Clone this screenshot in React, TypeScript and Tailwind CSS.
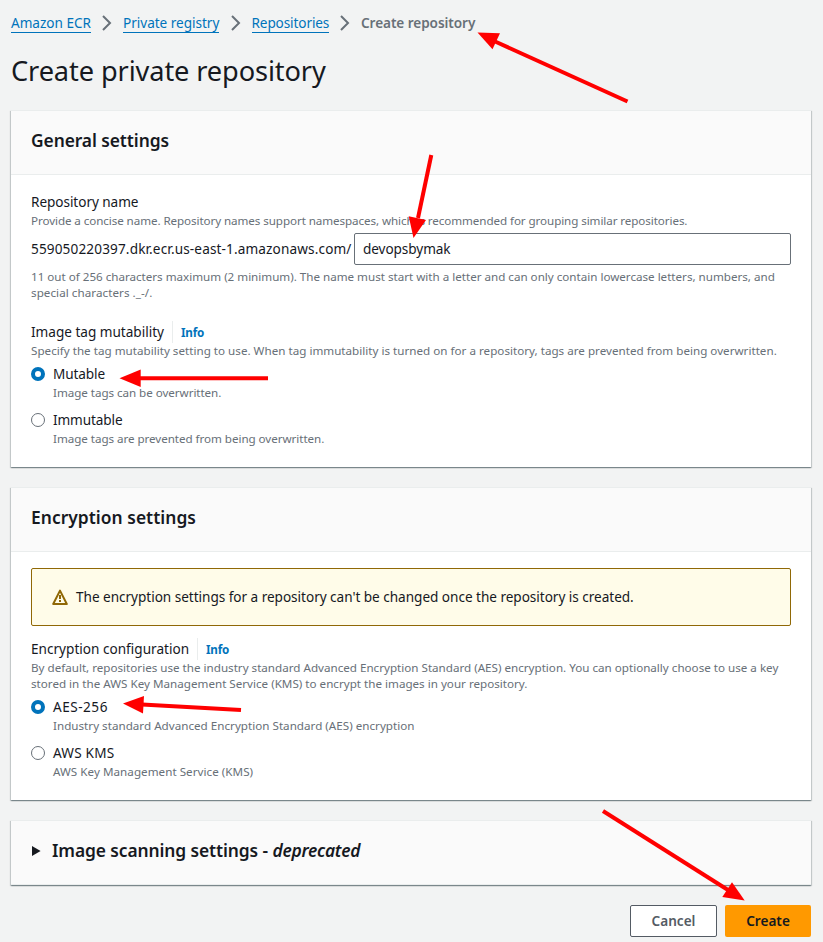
import type { ReactNode } from 'react';

const CARD =
  'border-t border-[#eaeded] bg-white shadow-[0_1px_1px_0_rgba(0,28,36,0.3),1px_1px_1px_0_rgba(0,28,36,0.15),-1px_1px_1px_0_rgba(0,28,36,0.15)]';

function Crumb({ children, className = '' }: { children: ReactNode; className?: string }) {
  return (
    <a href="#" className={`shrink-0 whitespace-nowrap text-[#0073bb] ${className}`}>
      <span className="border-b border-[#0073bb]">{children}</span>
    </a>
  );
}

function Chevron() {
  return (
    <svg viewBox="0 0 16 16" className="mx-2 size-4 shrink-0" fill="none" stroke="#687078" strokeWidth="2">
      <path d="M4 1l7 7-7 7" />
    </svg>
  );
}

function CardHeader({ children }: { children: ReactNode }) {
  return <div className="h-16 border-b border-[#eaeded] bg-[#fafafa] px-5 pt-[18px]">{children}</div>;
}

function Hint({ children, className = '' }: { children: ReactNode; className?: string }) {
  return <p className={`whitespace-nowrap text-[11.65px] leading-4 text-[#687078] ${className}`}>{children}</p>;
}

function LabelWithInfo({ children, className = '' }: { children: ReactNode; className?: string }) {
  return (
    <div className="flex h-[22px] items-center">
      <span className={`whitespace-nowrap ${className}`}>{children}</span>
      <span className="h-[22px] border-l border-[#eaeded]" />
      <a href="#" className="mt-px ml-2 text-[11.65px] leading-[22px] font-bold tracking-[-0.2px] text-[#0073bb]">
        Info
      </a>
    </div>
  );
}

interface RadioProps {
  checked?: boolean;
  label: string;
  hint: string;
  labelClass: string;
  hintClass: string;
}

function Radio({ checked, label, hint, labelClass, hintClass }: RadioProps) {
  return (
    <label className="flex gap-2">
      <span
        className={
          checked
            ? 'mt-1 size-3.5 shrink-0 rounded-full border-4 border-[#0073bb] bg-white'
            : 'mt-1 size-3.5 shrink-0 rounded-full border border-[#687078] bg-white'
        }
      />
      <span className="flex flex-col">
        <span className={`leading-[22px] ${labelClass}`}>{label}</span>
        <Hint className={hintClass}>{hint}</Hint>
      </span>
    </label>
  );
}

function Arrows() {
  return (
    <svg
      className="pointer-events-none absolute inset-0 h-[942px] w-[823px]"
      viewBox="0 0 823 942"
      fill="#ff0000"
      stroke="#ff0000"
    >
      <g strokeWidth="4" fill="none">
        <path d="M494 41L627.5 101.5" />
        <path d="M418 218L431.3 155" />
        <path d="M139 378.3H268" />
        <path d="M142 704.6L241 710" />
        <path d="M603 811L728 890" />
      </g>
      <g stroke="none">
        <path d="M477.5 32.5L500 33.3L492.5 49.3Z" />
        <path d="M413.5 238L408.7 216.3L426 220Z" />
        <path d="M119.5 378.3L140.7 369.5V387Z" />
        <path d="M123 703.6L144 696L143 713.5Z" />
        <path d="M744.7 900.5L732 882.3L722.3 896.9Z" />
      </g>
    </svg>
  );
}

export default function App() {
  return (
    <div className="relative h-[942px] w-[823px] overflow-hidden bg-[#f2f3f3] pt-3 pr-3 pl-[11px] font-['Noto_Sans','Open_Sans',sans-serif] text-[13.6px] leading-[22px] text-[#16191f]">
      <nav className="flex h-[22px] items-center">
        <Crumb className="w-20 tracking-[-0.02px]">Amazon ECR</Crumb>
        <Chevron />
        <Crumb className="w-[96.5px] tracking-[-0.03px]">Private registry</Crumb>
        <Chevron />
        <Crumb className="w-[77.5px] tracking-[-0.12px]">Repositories</Crumb>
        <Chevron />
        <span className="font-semibold tracking-[-0.07px] text-[#687078]">Create repository</span>
      </nav>

      <h1 className="mt-[19px] text-[27.2px] leading-9 tracking-[-0.11px]">Create private repository</h1>

      <main className="mt-[21px] flex w-[800px] flex-col gap-5">
        <section className={`h-[357px] ${CARD}`}>
          <CardHeader>
            <h2 className="text-[17.4px] leading-[22px] font-semibold tracking-[-0.08px]">General settings</h2>
          </CardHeader>
          <div className="px-5 pt-4">
            <div className="tracking-[-0.06px]">Repository name</div>
            <Hint className="tracking-[-0.09px]">
              Provide a concise name. Repository names support namespaces, which is recommended for grouping similar
              repositories.
            </Hint>
            <div className="mt-1 flex h-8 items-center">
              <span className="w-[323px] tracking-[0.13px]">559050220397.dkr.ecr.us-east-1.amazonaws.com/</span>
              <input
                className="h-8 w-[437px] rounded-xs border border-[#687078] bg-white px-2 pb-0.5 tracking-[-0.08px] outline-none"
                defaultValue="devopsbymak"
              />
            </div>
            <Hint className="mt-1 tracking-[-0.015px]">
              11 out of 256 characters maximum (2 minimum). The name must start with a letter and can only contain
              lowercase letters, numbers, and
            </Hint>
            <Hint className="mb-5 tracking-[0.05px]">special characters ._-/.</Hint>

            <LabelWithInfo className="w-[141px] tracking-[-0.015px]">Image tag mutability</LabelWithInfo>
            <Hint className="mb-1 tracking-[0.005px]">
              Specify the tag mutability setting to use. When tag immutability is turned on for a repository, tags are
              prevented from being overwritten.
            </Hint>
            <div className="flex flex-col gap-2">
              <Radio
                checked
                label="Mutable"
                hint="Image tags can be overwritten."
                labelClass="tracking-[-0.11px]"
                hintClass="tracking-[-0.057px]"
              />
              <Radio
                label="Immutable"
                hint="Image tags are prevented from being overwritten."
                labelClass="tracking-[-0.11px]"
                hintClass="tracking-[-0.056px]"
              />
            </div>
          </div>
        </section>

        <section className={`h-[313px] ${CARD}`}>
          <CardHeader>
            <h2 className="text-[17.4px] leading-[22px] font-semibold tracking-[0.04px]">Encryption settings</h2>
          </CardHeader>
          <div className="px-5 pt-4">
            <div className="mb-3 flex h-[58px] items-center gap-2 rounded-xs border border-[#906806] bg-[#fffce9] px-5">
              <svg viewBox="0 0 16 16" className="size-4 shrink-0" fill="none" stroke="#906806" strokeWidth="2">
                <path d="M8 1.6L14.8 15H1.2z" strokeLinejoin="round" />
                <path d="M8 6v4M8 11v2" />
              </svg>
              <span className="tracking-[-0.036px]">
                The encryption settings for a repository can't be changed once the repository is created.
              </span>
            </div>

            <LabelWithInfo className="w-[166px]">Encryption configuration</LabelWithInfo>
            <Hint className="tracking-[-0.008px]">
              By default, repositories use the industry standard Advanced Encryption Standard (AES) encryption. You can
              optionally choose to use a key
            </Hint>
            <Hint className="mb-1 tracking-[-0.004px]">
              stored in the AWS Key Management Service (KMS) to encrypt the images in your repository.
            </Hint>
            <div className="flex flex-col gap-2">
              <Radio
                checked
                label="AES-256"
                hint="Industry standard Advanced Encryption Standard (AES) encryption"
                labelClass="tracking-[0.5px]"
                hintClass="tracking-[0.008px]"
              />
              <Radio
                label="AWS KMS"
                hint="AWS Key Management Service (KMS)"
                labelClass="tracking-[0.2px]"
                hintClass="tracking-[0.03px]"
              />
            </div>
          </div>
        </section>

        <section className={`h-[65px] ${CARD}`}>
          <CardHeader>
            <h2 className="flex items-center text-[17.4px] leading-[22px] font-semibold">
              <svg viewBox="0 0 10 12" className="mt-0.5 mr-2.5 ml-px h-3 w-2.5 shrink-0" fill="#16191f">
                <path d="M0 1L8.6 6L0 11z" />
              </svg>
              <span className="w-[220.5px] whitespace-nowrap tracking-[-0.1px]">Image scanning settings -</span>
              <em className="tracking-[-0.28px]">deprecated</em>
            </h2>
          </CardHeader>
        </section>
      </main>

      <footer className="mt-5 flex w-[800px] justify-end gap-2">
        <button className="h-8 w-[87px] rounded-xs border border-[#545b64] bg-white font-semibold text-[#545b64]">
          Cancel
        </button>
        <button className="h-8 w-[86px] rounded-xs bg-[#ff9900] font-semibold text-[#16191f]">Create</button>
      </footer>

      <Arrows />
    </div>
  );
}
